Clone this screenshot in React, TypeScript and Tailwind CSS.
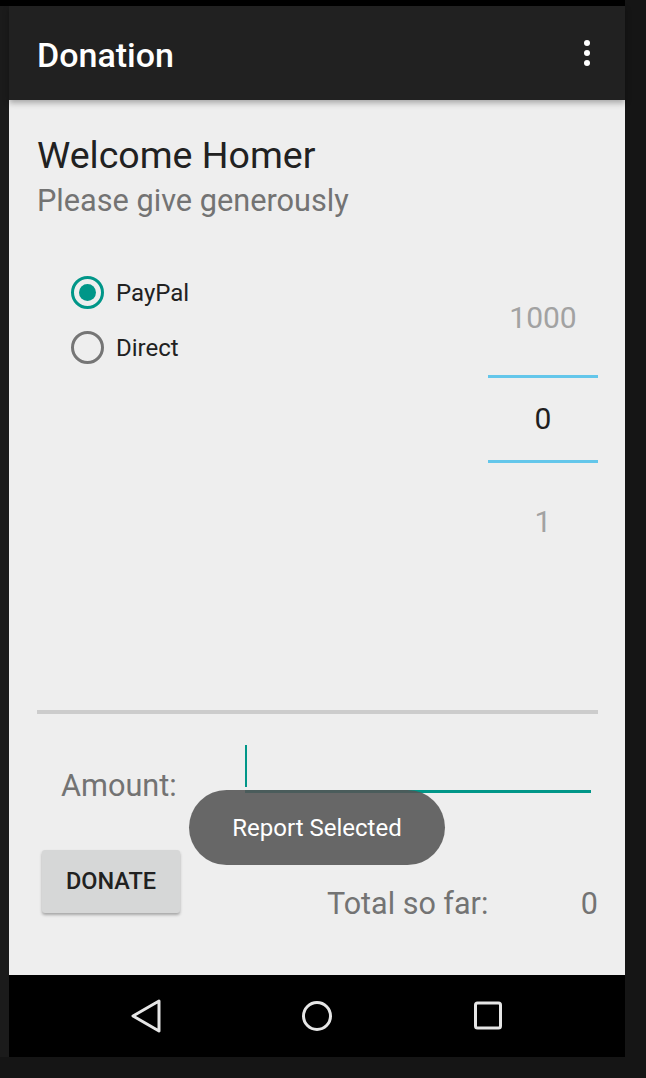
import React from 'react'

const teal = '#009688'

const Radio = ({ label, checked }: { label: string; checked?: boolean }) => {
  return (
    <div className="flex h-[55px] items-center">
      <div
        className={
          checked
            ? 'flex h-[33px] w-[33px] items-center justify-center rounded-full border-[3px] border-[#009688]'
            : 'flex h-[33px] w-[33px] items-center justify-center rounded-full border-[3px] border-[#757575]'
        }
      >
        {checked && <div className="h-[17px] w-[17px] rounded-full bg-[#009688]" />}
      </div>
      <span className="ml-[12px] text-[24px] leading-none text-[#212121]">{label}</span>
    </div>
  )
}

const NumberPicker = () => {
  return (
    <div className="flex w-[110px] flex-col">
      <div className="flex h-[103px] items-center justify-center text-[30px] leading-none text-[#a2a2a2]">1000</div>
      <div className="mt-[6px] h-[3px] bg-[#63c6ea]" />
      <div className="flex h-[82px] items-center justify-center text-[30px] leading-none text-[#1f1f1f]">0</div>
      <div className="h-[3px] bg-[#63c6ea]" />
      <div className="flex h-[118px] items-center justify-center text-[30px] leading-none text-[#a2a2a2]">1</div>
    </div>
  )
}

const NavBar = () => {
  return (
    <div className="flex h-[82px] items-center justify-center gap-[131px] bg-black">
      {/* back */}
      <svg width="40" height="40" viewBox="0 0 40 40" fill="none" stroke="#e6e6e6" strokeWidth="3" strokeLinejoin="round">
        <path d="M33 5 L7 20 L33 35 Z" />
      </svg>
      {/* home */}
      <svg width="40" height="40" viewBox="0 0 40 40" fill="none" stroke="#e6e6e6" strokeWidth="3">
        <circle cx="20" cy="20" r="13.5" />
      </svg>
      {/* recents */}
      <svg width="40" height="40" viewBox="0 0 40 40" fill="none" stroke="#e6e6e6" strokeWidth="3">
        <rect x="7.5" y="7" width="25" height="25" rx="2" />
      </svg>
    </div>
  )
}

export default function App() {
  return (
    <div className="flex h-[1078px] w-[646px] bg-[#151515] font-['Roboto',sans-serif]">
      <div className="flex w-[625px] flex-col">
        <div className="h-[6px] bg-black" />
        <div className="flex h-[1051px]">
          <div className="w-[9px] bg-[#1b1b1b]" />
          <div className="flex flex-1 flex-col">
            {/* App bar */}
            <header className="relative z-10 flex h-[94px] items-start justify-between bg-[#212121] pl-[28px] pr-[35px] shadow-[0_3px_6px_rgba(0,0,0,0.3)]">
              <h1 className="pt-[32px] text-[34px] font-medium leading-none text-white">Donation</h1>
              <div className="flex h-full flex-col items-center justify-center gap-[4px]">
                <div className="h-[6px] w-[6px] rounded-full bg-white" />
                <div className="h-[6px] w-[6px] rounded-full bg-white" />
                <div className="h-[6px] w-[6px] rounded-full bg-white" />
              </div>
            </header>

            {/* Content */}
            <main className="relative flex h-[875px] flex-col bg-[#eeeeee] pl-[28px] pr-[27px] pt-[37px]">
              <h2 className="text-[37.5px] leading-none text-[#212121]">Welcome Homer</h2>
              <p className="mt-[11px] text-[30.7px] leading-none text-[#737373]">Please give generously</p>

              <div className="mt-[50px] flex items-start justify-between">
                <div className="ml-[34px] -mt-[1px] flex flex-col">
                  <Radio label="PayPal" checked />
                  <Radio label="Direct" />
                </div>
                <NumberPicker />
              </div>

              <div className="mt-[129px] h-[4px] bg-[#cccccc]" />

              {/* Amount */}
              <div className="mt-[31px] flex items-start">
                <div className="w-[208px] pl-[24px] pt-[26px] text-[30.7px] leading-none text-[#737373]">Amount:</div>
                <div className="mr-[7px] h-[48px] flex-1 border-b-[3px] border-[#009688]">
                  <div className="h-[42px] w-[2px]" style={{ backgroundColor: teal }} />
                </div>
              </div>

              {/* Donate + total */}
              <div className="mt-[48px] flex items-start">
                <button className="ml-[5px] flex h-[63px] w-[138px] items-center justify-center rounded-[3px] bg-[#d6d7d7] text-[23.5px] font-medium leading-none text-[#212121] shadow-[0_2px_3px_rgba(0,0,0,0.3)]">
                  DONATE
                </button>
                <span className="ml-[147px] mt-[39px] text-[30.5px] leading-none text-[#737373]">Total so far:</span>
                <span className="ml-auto mt-[39px] text-[30.5px] leading-none text-[#737373]">0</span>
              </div>

              {/* Toast */}
              <div className="absolute left-[180px] top-[690px] flex h-[75px] w-[256px] items-center justify-center rounded-full bg-[rgba(84,84,84,0.88)]">
                <span className="text-[24px] leading-none text-white">Report Selected</span>
              </div>
            </main>

            <NavBar />
          </div>
        </div>
      </div>
    </div>
  )
}
